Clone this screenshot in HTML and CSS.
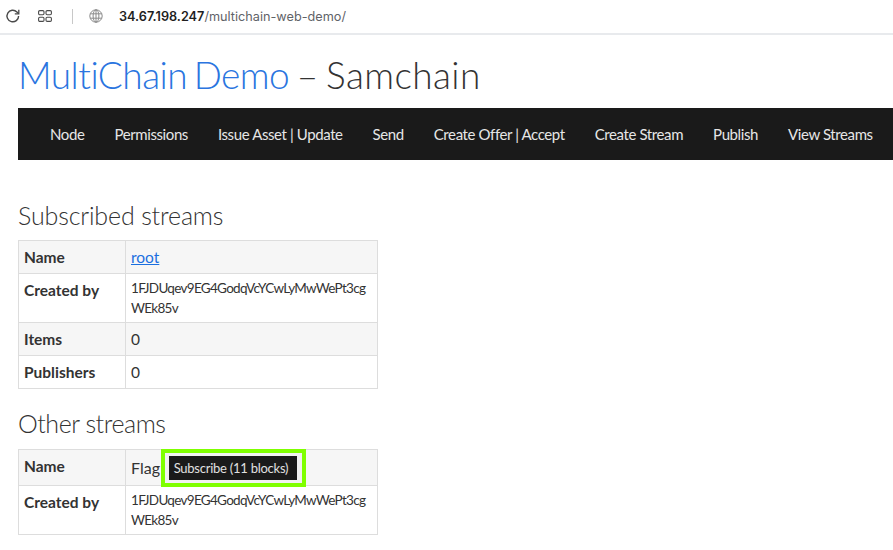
FILE: index.html
```html
<!DOCTYPE html>
<html lang="en">
<head>
<meta charset="utf-8">
<title>MultiChain Demo</title>
<link rel="stylesheet" href="styles.css">
</head>
<body>
<header class="browser-bar">
  <svg class="icon-reload" width="16" height="16" viewBox="0 0 16 16" fill="none" stroke="#4a4a4a" stroke-width="1.4"><path d="M13.6 8a5.8 5.8 0 1 1-1.7-4.1L13.6 5.6"/><path d="M13.8 1.8v4h-4" stroke-width="1.3"/></svg>
  <svg class="icon-tabs" width="14" height="12" viewBox="0 0 14 12" fill="none" stroke="#4a4a4a" stroke-width="1.1"><rect x="0.6" y="0.6" width="5.4" height="4.2" rx="1.2"/><rect x="8" y="0.6" width="5.4" height="4.2" rx="1.2"/><rect x="0.6" y="7.2" width="5.4" height="4.2" rx="1.2"/><rect x="8" y="7.2" width="5.4" height="4.2" rx="1.2"/></svg>
  <span class="bar-divider"></span>
  <svg class="icon-globe" width="14" height="14" viewBox="0 0 14 14" fill="none" stroke="#8a8a8a" stroke-width="1"><circle cx="7" cy="7" r="6.2"/><ellipse cx="7" cy="7" rx="2.9" ry="6.2"/><path d="M7 .8v12.4M1.2 4.8h11.6M1.2 9.2h11.6"/></svg>
  <span class="url"><b>34.67.198.247</b>/multichain-web-demo/</span>
</header>
<main class="page">
  <h1 class="title"><a href="#">MultiChain Demo</a> – Samchain</h1>
  <nav class="nav">
    <a href="#">Node</a>
    <a href="#">Permissions</a>
    <a href="#">Issue Asset | Update</a>
    <a href="#">Send</a>
    <a href="#">Create Offer | Accept</a>
    <a href="#">Create Stream</a>
    <a href="#">Publish</a>
    <a href="#">View Streams</a>
  </nav>
  <h2 class="section first">Subscribed streams</h2>
  <table class="info">
    <tr class="shade"><th>Name</th><td><a href="#">root</a></td></tr>
    <tr><th>Created by</th><td class="addr">1FJDUqev9EG4GodqVcYCwLyMwWePt3cgWEk85v</td></tr>
    <tr class="shade"><th>Items</th><td>0</td></tr>
    <tr><th>Publishers</th><td>0</td></tr>
  </table>
  <h2 class="section second">Other streams</h2>
  <table class="info">
    <tr class="shade"><th class="name-head">Name</th><td class="flag"><div class="flag-row"><span class="flag-name">Flag</span><span class="highlight"><button class="subscribe">Subscribe (11 blocks)</button></span></div></td></tr>
    <tr><th>Created by</th><td class="addr">1FJDUqev9EG4GodqVcYCwLyMwWePt3cgWEk85v</td></tr>
  </table>
</main>
</body>
</html>
```
FILE: styles.css
```css
* { box-sizing: border-box; }
html, body { margin: 0; padding: 0; height: 100%; overflow: hidden; background: #fff; }
body { font-family: "Lato", "Liberation Sans", sans-serif; color: #333; }
.browser-bar {
  height: 35px;
  border-bottom: 2px solid #e8eaed;
  display: flex;
  align-items: center;
  padding-left: 5px;
  padding-bottom: 1px;
}
.icon-tabs { margin-left: 17px; }
.bar-divider { width: 1px; height: 15px; background: #c8c8c8; margin-left: 20px; }
.icon-globe { margin-left: 16px; }
.url { margin-left: 16px; font-family: "Inter", sans-serif; font-size: 12.7px; color: #5f6368; white-space: nowrap; }
.url b { color: #1f1f1f; font-weight: 600; }
.page { padding-left: 18px; }
.title { margin: 0; height: 73px; padding: 14px 0 0; font-size: 37px; line-height: 52px; font-weight: 300; color: #333; letter-spacing: 0.4px; word-spacing: -3px; white-space: nowrap; }
.title a { color: #2a75e0; text-decoration: none; letter-spacing: -0.5px; }
.nav {
  height: 52px;
  background: #1a1a1a;
  display: flex;
  align-items: center;
  gap: 30px;
  padding-left: 32px;
  white-space: nowrap;
}
.nav a { color: #e6e6e6; text-decoration: none; font-size: 15px; letter-spacing: -0.4px; }
.section { margin: 0; font-size: 25px; line-height: 36px; font-weight: 300; color: #333; }
.section.first { margin-top: 37px; margin-bottom: 7px; letter-spacing: -0.15px; }
.section.second { margin-top: 16px; margin-bottom: 8px; letter-spacing: -0.45px; }
.info { border-collapse: collapse; width: 360px; table-layout: fixed; font-size: 15.5px; }
.info th, .info td { border: 1px solid #ddd; text-align: left; vertical-align: top; padding: 5px; line-height: 22px; }
.info th { width: 107px; font-weight: 700; }
.shade th, .shade td { background: #f6f6f6; }
.info a { color: #1a6fe0; }
.info td.addr { font-size: 13.5px; letter-spacing: -0.7px; word-break: break-all; padding: 4px 5px; line-height: 20px; }
.info th.name-head { vertical-align: middle; padding: 0 5px 3px; }
.info td.flag { padding: 0 5px; height: 36px; }
.flag-row { display: flex; align-items: center; height: 35px; }
.flag-name { font-size: 16px; margin-right: 1px; }
.highlight { flex: none; height: 38px; border: 4px solid #7fff00; padding: 3px 5px 3px 4px; display: flex; background: #f1f1f1; }
.subscribe { background: #1a1a1a; color: #e0e0e0; border: 0; height: 24px; width: 128px; padding: 0 4px 0 0; font: 13px "Lato", sans-serif; letter-spacing: -0.25px; }
```
